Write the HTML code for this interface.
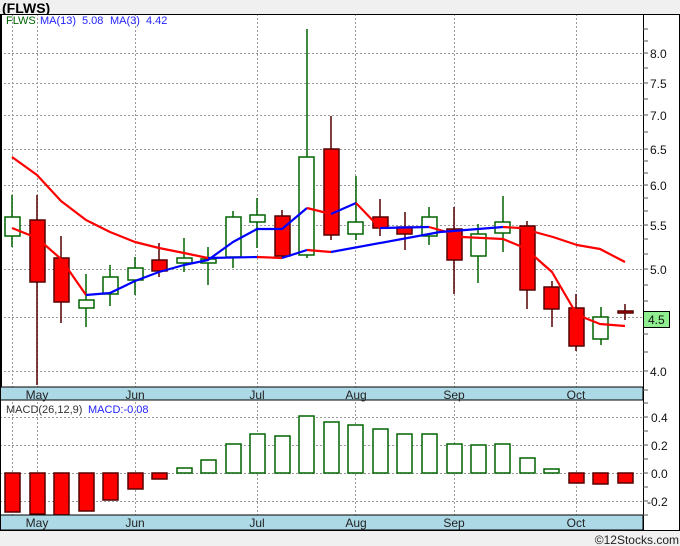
<!DOCTYPE html>
<html><head><meta charset="utf-8"><style>
html,body{margin:0;padding:0;background:#f0f0f0;}
svg{display:block;font-family:"Liberation Sans",sans-serif;}
</style></head><body>
<svg width="680" height="546" viewBox="0 0 680 546" xmlns="http://www.w3.org/2000/svg">
<rect x="0" y="0" width="680" height="546" fill="#f0f0f0"/>
<text x="2" y="13" font-size="14" font-weight="bold" fill="#000">(FLWS)</text>
<rect x="0" y="14" width="680" height="517" fill="#fff"/>
<g stroke="#999" stroke-width="1" stroke-dasharray="2,2">
<line x1="0" x2="643" y1="53.5" y2="53.5"/><line x1="0" x2="643" y1="83.5" y2="83.5"/><line x1="0" x2="643" y1="115.5" y2="115.5"/><line x1="0" x2="643" y1="149.5" y2="149.5"/><line x1="0" x2="643" y1="185.5" y2="185.5"/><line x1="0" x2="643" y1="225.5" y2="225.5"/><line x1="0" x2="643" y1="269.5" y2="269.5"/><line x1="0" x2="643" y1="317.5" y2="317.5"/><line x1="0" x2="643" y1="371.5" y2="371.5"/>
<line x1="0" x2="643" y1="417.5" y2="417.5"/><line x1="0" x2="643" y1="445.5" y2="445.5"/><line x1="0" x2="643" y1="473.5" y2="473.5"/><line x1="0" x2="643" y1="501.5" y2="501.5"/>
<line x1="12.5" x2="12.5" y1="14" y2="515"/><line x1="37.5" x2="37.5" y1="14" y2="515"/><line x1="135.5" x2="135.5" y1="14" y2="515"/><line x1="257.5" x2="257.5" y1="14" y2="515"/><line x1="355.5" x2="355.5" y1="14" y2="515"/><line x1="454.5" x2="454.5" y1="14" y2="515"/><line x1="576.5" x2="576.5" y1="14" y2="515"/>
</g>
<g font-size="11">
<text x="6" y="24" fill="#006400">FLWS</text>
<text x="40" y="24" fill="#2222ff">MA(13)</text>
<text x="82" y="24" fill="#2222ff">5.08</text>
<text x="110" y="24" fill="#2222ff">MA(3)</text>
<text x="146" y="24" fill="#2222ff">4.42</text>
</g>
<g stroke-width="1.5">
<g stroke="#006400" fill="#fff">
<line x1="12" x2="12" y1="195" y2="247"/><rect x="5" y="217" width="15" height="19"/>
<line x1="86" x2="86" y1="274" y2="327"/><rect x="79" y="300" width="15" height="8"/>
<line x1="110" x2="110" y1="265" y2="306"/><rect x="103" y="277" width="15" height="17"/>
<line x1="135" x2="135" y1="257" y2="295"/><rect x="128" y="268" width="15" height="12"/>
<line x1="184" x2="184" y1="238" y2="272"/><rect x="177" y="258" width="15" height="5"/>
<line x1="208" x2="208" y1="247" y2="285"/><rect x="201" y="259" width="15" height="4"/>
<line x1="233" x2="233" y1="211" y2="268"/><rect x="226" y="217" width="15" height="40"/>
<line x1="257" x2="257" y1="198" y2="248"/><rect x="250" y="215" width="15" height="7"/>
<line x1="307" x2="307" y1="29" y2="258"/><rect x="299" y="157" width="15" height="98"/>
<line x1="356" x2="356" y1="176" y2="240"/><rect x="348" y="222" width="15" height="12"/>
<line x1="429" x2="429" y1="207" y2="245"/><rect x="422" y="217" width="15" height="19"/>
<line x1="478" x2="478" y1="224" y2="283"/><rect x="471" y="234" width="15" height="22"/>
<line x1="503" x2="503" y1="196" y2="252"/><rect x="495" y="222" width="15" height="11"/>
<line x1="601" x2="601" y1="307" y2="345"/><rect x="593" y="317" width="15" height="22"/>
</g>
<g stroke="#550000" fill="#ff0000">
<line x1="37" x2="37" y1="195" y2="385"/><rect x="30" y="220" width="15" height="62"/>
<line x1="61" x2="61" y1="236" y2="323"/><rect x="54" y="258" width="15" height="44"/>
<line x1="159" x2="159" y1="243" y2="277"/><rect x="152" y="260" width="15" height="11"/>
<line x1="282" x2="282" y1="210" y2="257"/><rect x="275" y="216" width="15" height="40"/>
<line x1="331" x2="331" y1="116" y2="240"/><rect x="324" y="149" width="15" height="86"/>
<line x1="380" x2="380" y1="199" y2="236"/><rect x="373" y="217" width="15" height="11"/>
<line x1="405" x2="405" y1="212" y2="250"/><rect x="397" y="227" width="15" height="7"/>
<line x1="454" x2="454" y1="207" y2="294"/><rect x="447" y="229" width="15" height="31"/>
<line x1="527" x2="527" y1="221" y2="309"/><rect x="520" y="226" width="15" height="64"/>
<line x1="552" x2="552" y1="281" y2="327"/><rect x="544" y="287" width="15" height="22"/>
<line x1="576" x2="576" y1="294" y2="351"/><rect x="569" y="308" width="15" height="38"/>
<line x1="625" x2="625" y1="304" y2="320"/><rect x="618" y="311" width="15" height="2"/>
</g>
</g>
<g fill="none" stroke-width="2.2" stroke-linejoin="round">
<polyline stroke="#ff0000" points="12,157 37,175 61,201 86,220 110,232 135,242 159,248 184,253 208,258"/>
<polyline stroke="#ff0000" points="12,228 37,238 61,259 86,295"/>
<polyline stroke="#0000ff" points="86,295 110,293 135,281 159,272 184,265 208,260 233,242 257,229 282,229 307,208"/>
<polyline stroke="#ff0000" points="307,208 331,214"/>
<polyline stroke="#0000ff" points="331,214 356,203"/>
<polyline stroke="#ff0000" points="356,203 380,228"/>
<polyline stroke="#0000ff" points="380,228 429,227"/>
<polyline stroke="#ff0000" points="429,227 447,232 462,237 503,239 520,246 535,257 552,272 573,308 585,318 600,324 625,326"/>
<polyline stroke="#0000ff" points="208,258 257,257"/>
<polyline stroke="#ff0000" points="257,257 282,258"/>
<polyline stroke="#0000ff" points="282,258 307,250"/>
<polyline stroke="#ff0000" points="307,250 331,252"/>
<polyline stroke="#0000ff" points="331,252 440,232 453,231 503,227"/>
<polyline stroke="#ff0000" points="503,227 520,228 553,237 577,245 600,249 625,262"/>
</g>
<g font-size="11">
<text x="6" y="413" fill="#333">MACD(26,12,9)</text>
<text x="88" y="413" fill="#2222ff">MACD:-0.08</text>
</g>
<g stroke-width="1.5">
<g stroke="#550000" fill="#ff0000">
<rect x="5" y="473" width="15" height="39"/><rect x="30" y="473" width="15" height="41"/><rect x="54" y="473" width="15" height="42"/><rect x="79" y="473" width="15" height="38"/><rect x="103" y="473" width="15" height="27"/><rect x="128" y="473" width="15" height="16"/><rect x="152" y="473" width="15" height="6"/>
<rect x="569" y="473" width="15" height="10"/><rect x="593" y="473" width="15" height="11"/><rect x="618" y="473" width="15" height="10"/>
</g>
<g stroke="#006400" fill="#fff">
<rect x="177" y="468" width="15" height="5"/><rect x="201" y="460" width="15" height="13"/><rect x="226" y="444" width="15" height="29"/><rect x="250" y="434" width="15" height="39"/><rect x="275" y="436" width="15" height="37"/><rect x="299" y="416" width="15" height="57"/><rect x="324" y="422" width="15" height="51"/><rect x="348" y="425" width="15" height="48"/><rect x="373" y="429" width="15" height="44"/><rect x="397" y="434" width="15" height="39"/><rect x="422" y="434" width="15" height="39"/><rect x="447" y="444" width="15" height="29"/><rect x="471" y="445" width="15" height="28"/><rect x="495" y="444" width="15" height="29"/><rect x="520" y="458" width="15" height="15"/><rect x="544" y="469" width="15" height="4"/>
</g>
</g>
<rect x="0" y="387" width="643" height="13" fill="#add8e6" stroke="#000" stroke-width="1"/>
<rect x="0" y="515" width="643" height="15" fill="#add8e6" stroke="#000" stroke-width="1"/>
<g font-size="12" fill="#222" text-anchor="middle">
<text x="37" y="399">May</text><text x="135" y="399">Jun</text><text x="257" y="399">Jul</text><text x="356" y="399">Aug</text><text x="454" y="399">Sep</text><text x="576" y="399">Oct</text>
<text x="37" y="527">May</text><text x="135" y="527">Jun</text><text x="257" y="527">Jul</text><text x="356" y="527">Aug</text><text x="454" y="527">Sep</text><text x="576" y="527">Oct</text>
</g>
<rect x="0.5" y="14.5" width="679" height="516" fill="none" stroke="#000"/>
<line x1="1" x2="1" y1="14" y2="387" stroke="#000" stroke-width="2"/>
<line x1="643.5" x2="643.5" y1="14" y2="531" stroke="#000"/>
<g stroke="#555" stroke-width="1">
<line x1="643" x2="648" y1="29" y2="29"/><line x1="643" x2="648" y1="41" y2="41"/><line x1="643" x2="648" y1="53" y2="53"/><line x1="643" x2="648" y1="68" y2="68"/><line x1="643" x2="648" y1="83" y2="83"/><line x1="643" x2="648" y1="99" y2="99"/><line x1="643" x2="648" y1="115" y2="115"/><line x1="643" x2="648" y1="132" y2="132"/><line x1="643" x2="648" y1="149" y2="149"/><line x1="643" x2="648" y1="161" y2="161"/><line x1="643" x2="648" y1="173" y2="173"/><line x1="643" x2="648" y1="185" y2="185"/><line x1="643" x2="648" y1="198" y2="198"/><line x1="643" x2="648" y1="211" y2="211"/><line x1="643" x2="648" y1="225" y2="225"/><line x1="643" x2="648" y1="239" y2="239"/><line x1="643" x2="648" y1="254" y2="254"/><line x1="643" x2="648" y1="269" y2="269"/><line x1="643" x2="648" y1="285" y2="285"/><line x1="643" x2="648" y1="301" y2="301"/><line x1="643" x2="648" y1="317" y2="317"/><line x1="643" x2="648" y1="334" y2="334"/><line x1="643" x2="648" y1="352" y2="352"/><line x1="643" x2="648" y1="371" y2="371"/><line x1="643" x2="648" y1="390" y2="390"/>
<line x1="643" x2="648" y1="403" y2="403"/><line x1="643" x2="648" y1="417" y2="417"/><line x1="643" x2="648" y1="431" y2="431"/><line x1="643" x2="648" y1="445" y2="445"/><line x1="643" x2="648" y1="459" y2="459"/><line x1="643" x2="648" y1="473" y2="473"/><line x1="643" x2="648" y1="487" y2="487"/><line x1="643" x2="648" y1="501" y2="501"/><line x1="643" x2="648" y1="515" y2="515"/>
</g>
<rect x="643.5" y="311.5" width="26" height="16" fill="#90ee90" stroke="#000"/>
<g font-size="12" fill="#111">
<text x="650" y="58">8.0</text><text x="650" y="88">7.5</text><text x="650" y="120">7.0</text><text x="650" y="154">6.5</text><text x="650" y="190">6.0</text><text x="650" y="230">5.5</text><text x="650" y="274">5.0</text><text x="648" y="324">4.5</text><text x="650" y="376">4.0</text>
<text x="651" y="422">0.4</text><text x="651" y="450">0.2</text><text x="651" y="478">0.0</text><text x="647" y="506">-0.2</text>
</g>
<rect x="0" y="531" width="680" height="15" fill="#f0f0f0"/>
<text x="679" y="544" font-size="12" fill="#222" text-anchor="end">©12Stocks.com</text>
</svg>
</body></html>
